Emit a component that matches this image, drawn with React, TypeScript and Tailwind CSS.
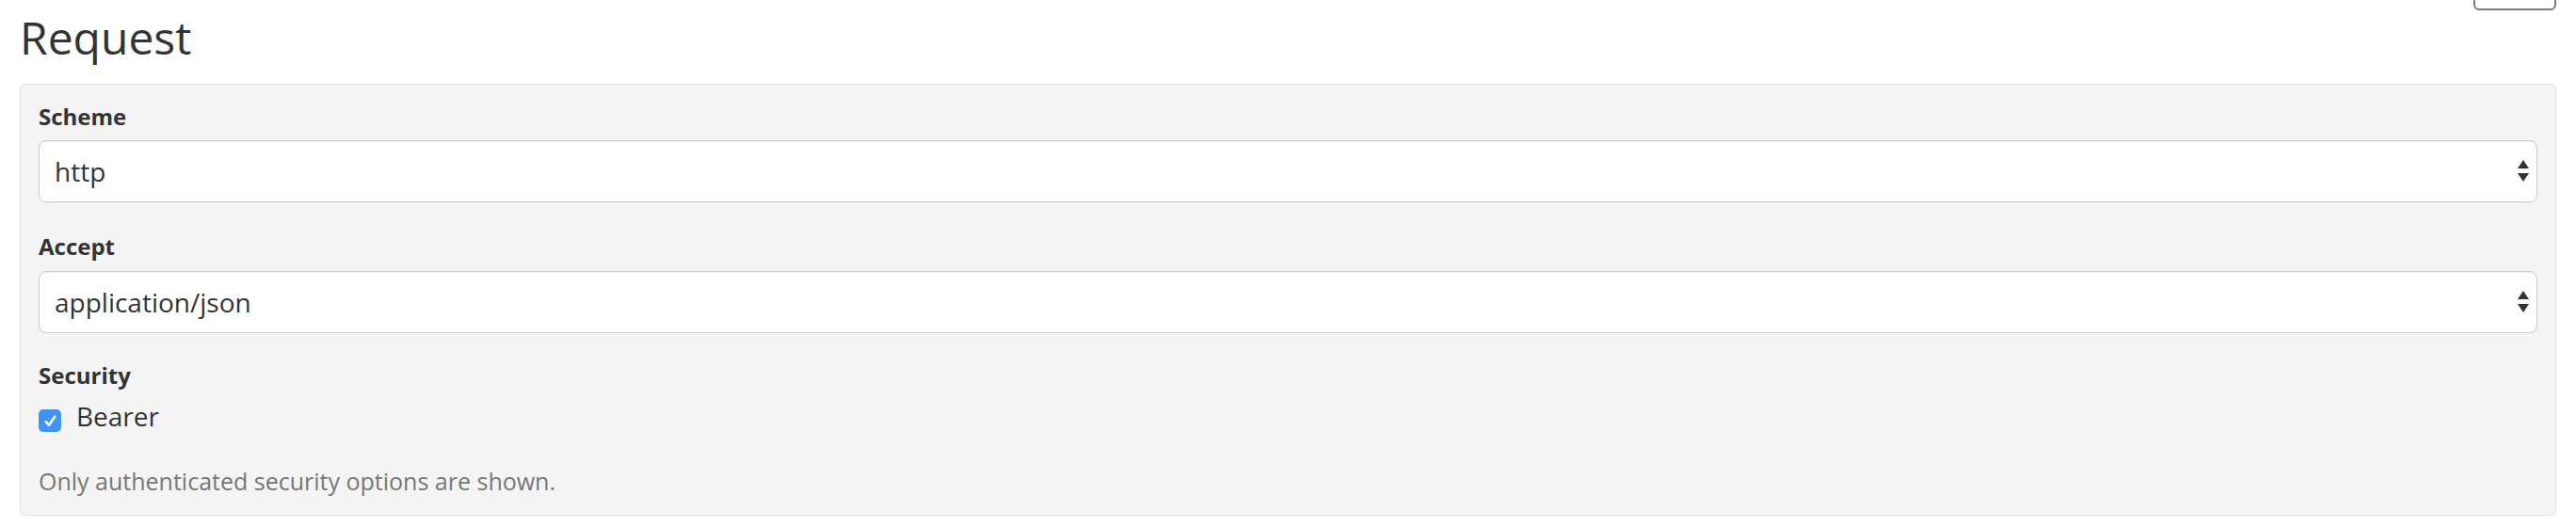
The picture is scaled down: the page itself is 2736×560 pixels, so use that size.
import React from "react";

const font = { fontFamily: '"Open Sans", "Noto Sans", Arial, sans-serif' };

function SelectBox({ value }: { value: string }) {
  return (
    <div className="relative flex h-[66px] items-center rounded-[8px] border border-[#c9c9c9] bg-white pl-[16px] pr-[40px] text-[28px] text-[#333] shadow-[inset_0_1px_1px_rgba(0,0,0,0.06)]">
      <span className="leading-[40px]">{value}</span>
      <svg
        className="absolute right-[8px] top-1/2 -translate-y-1/2"
        width="12"
        height="24"
        viewBox="0 0 12 24"
      >
        <path d="M6 0 L12 9 L0 9 Z" fill="#333" />
        <path d="M0 14 L12 14 L6 23 Z" fill="#333" />
      </svg>
    </div>
  );
}

function Label({ children, className = "" }: { children: React.ReactNode; className?: string }) {
  return <div className={`text-[24px] font-bold leading-[34px] text-[#333] ${className}`}>{children}</div>;
}

export default function App() {
  return (
    <div className="min-h-[560px] bg-white px-[21px] pt-[14px]" style={font}>
      <div className="mb-[24px] flex items-start justify-between">
        <h1 className="text-[48px] font-normal leading-[51px] text-[#333]">Request</h1>
        <button className="-mt-[43px] h-[40px] w-[88px] rounded-[6px] border-2 border-[#7a7a7a] bg-white" />
      </div>

      <div className="rounded-[6px] border border-[#e1e1e1] bg-[#f4f4f4] px-[19px] pb-[19px] pt-[17px]">
        <Label className="mb-[8px]">Scheme</Label>
        <SelectBox value="http" />

        <Label className="mb-[9px] mt-[30px]">Accept</Label>
        <SelectBox value="application/json" />

        <Label className="mt-[28px]">Security</Label>
        <div className="mt-[6px] flex items-start gap-[16px]">
          <div className="mt-[13px] flex h-[24px] w-[24px] items-center justify-center rounded-[5px] bg-[#3d94f6]">
            <svg width="15" height="15" viewBox="0 0 14 14" fill="none">
              <path d="M2.5 7.5 L5.5 11 L11.5 2.5" stroke="white" strokeWidth="2.4" strokeLinecap="round" strokeLinejoin="round" />
            </svg>
          </div>
          <span className="text-[28px] leading-[40px] text-[#333]">Bearer</span>
        </div>

        <p className="mt-[32px] text-[25px] leading-[34px] text-[#777]">
          Only authenticated security options are shown.
        </p>
      </div>
    </div>
  );
}
